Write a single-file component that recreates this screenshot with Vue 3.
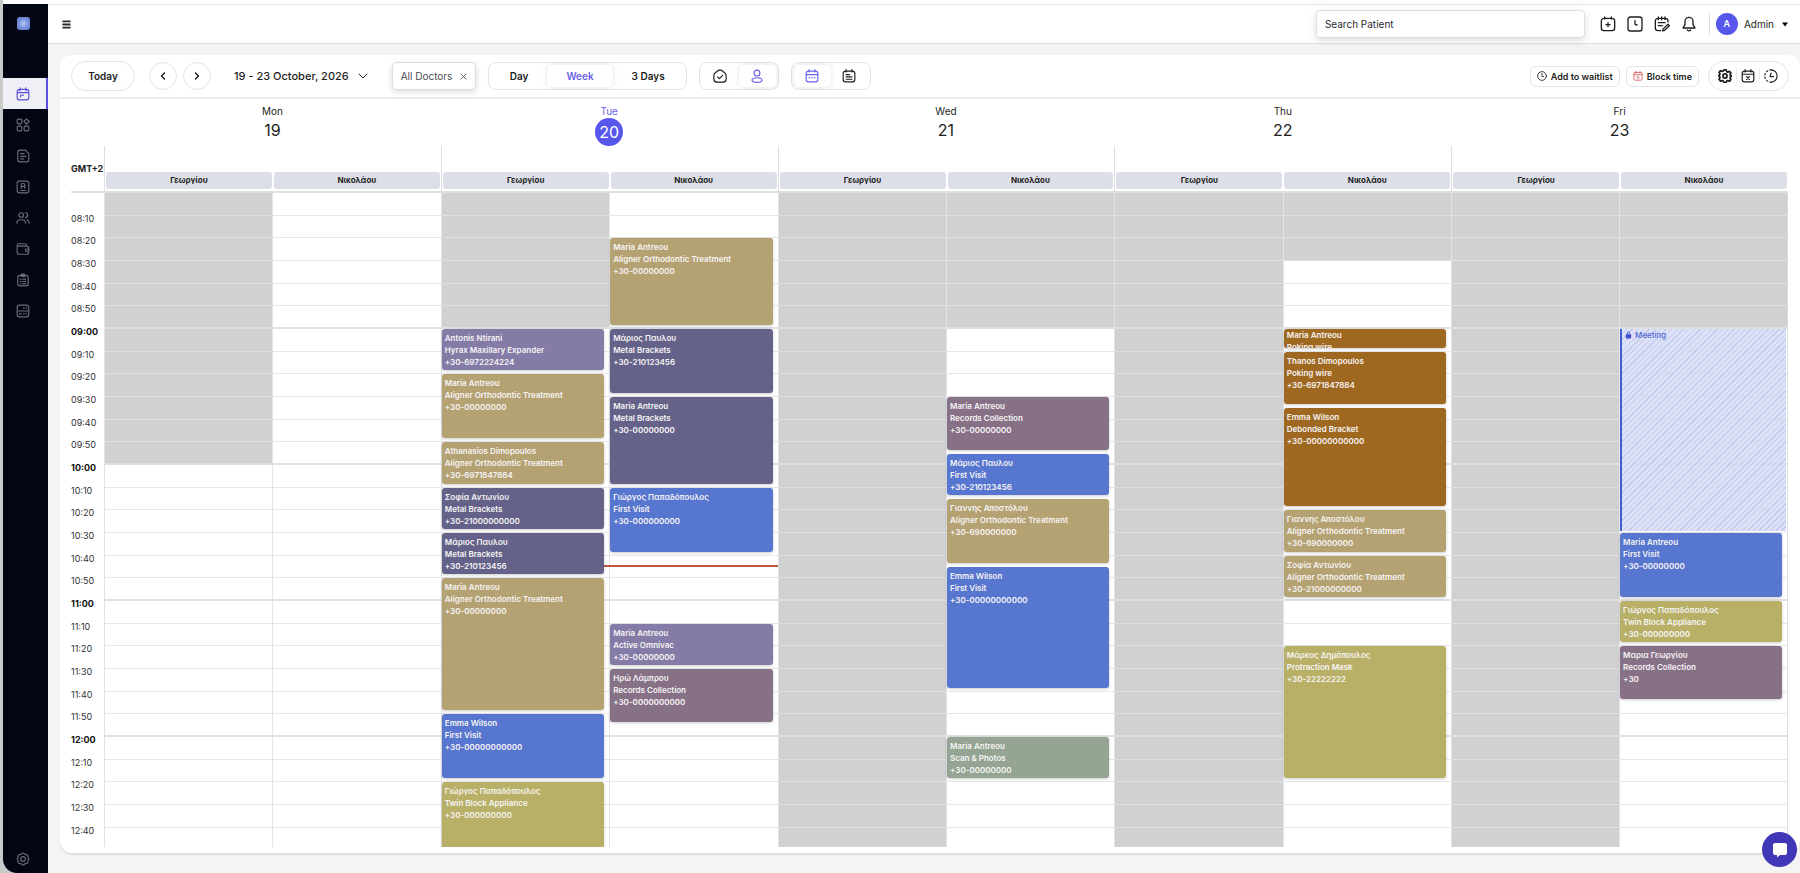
<script setup>
import { ref } from 'vue'

const SLOT_MINUTES = 10
const TOTAL_MINUTES = 300
const pct = (minutes) => (minutes / TOTAL_MINUTES) * 100 + '%'

const search = ref('')
const view = ref('Week')
const views = ['Day', 'Week', '3 Days']

const slots = Array.from({ length: TOTAL_MINUTES / SLOT_MINUTES }, (_, i) => {
  const m = i * SLOT_MINUTES
  const h = String(8 + Math.floor(m / 60)).padStart(2, '0')
  const edge = i === 0 || m === TOTAL_MINUTES - SLOT_MINUTES
  return { start: m, label: edge ? '' : `${h}:${String(m % 60).padStart(2, '0')}`, hour: m % 60 === 0 }
})

const ALIGNER = 'Aligner Orthodontic Treatment'
const ev = (start, length, color, name, treatment, phone) => ({ start, length, color, name, treatment, phone })

const days = [
  {
    name: 'Mon', date: 19,
    columns: [
      { doctor: 'Γεωργίου', off: 120, events: [] },
      { doctor: 'Νικολάου', off: 0, events: [] },
    ],
  },
  {
    name: 'Tue', date: 20, today: true, now: 164,
    columns: [
      {
        doctor: 'Γεωργίου', off: 60,
        events: [
          ev(60, 20, 'purple', 'Antonis Ntirani', 'Hyrax Maxillary Expander', '+30-6972224224'),
          ev(80, 30, 'tan', 'Maria Antreou', ALIGNER, '+30-00000000'),
          ev(110, 20, 'tan', 'Athanasios Dimopoulos', ALIGNER, '+30-6971847884'),
          ev(130, 20, 'indigo', 'Σοφία Αντωνίου', 'Metal Brackets', '+30-21000000000'),
          ev(150, 20, 'indigo', 'Μάριος Παυλου', 'Metal Brackets', '+30-210123456'),
          ev(170, 60, 'tan', 'Maria Antreou', ALIGNER, '+30-00000000'),
          ev(230, 30, 'blue', 'Emma Wilson', 'First Visit', '+30-00000000000'),
          ev(260, 40, 'olive', 'Γιώργος Παπαδόπουλος', 'Twin Block Appliance', '+30-000000000'),
        ],
      },
      {
        doctor: 'Νικολάου', off: 0,
        events: [
          ev(20, 40, 'tan', 'Maria Antreou', ALIGNER, '+30-00000000'),
          ev(60, 30, 'indigo', 'Μάριος Παυλου', 'Metal Brackets', '+30-210123456'),
          ev(90, 40, 'indigo', 'Maria Antreou', 'Metal Brackets', '+30-00000000'),
          ev(130, 30, 'blue', 'Γιώργος Παπαδόπουλος', 'First Visit', '+30-000000000'),
          ev(190, 20, 'purple', 'Maria Antreou', 'Active Omnivac', '+30-00000000'),
          ev(210, 25, 'mauve', 'Ηρώ Λάμπρου', 'Records Collection', '+30-0000000000'),
        ],
      },
    ],
  },
  {
    name: 'Wed', date: 21,
    columns: [
      { doctor: 'Γεωργίου', off: 300, events: [] },
      {
        doctor: 'Νικολάου', off: 60,
        events: [
          ev(90, 25, 'mauve', 'Maria Antreou', 'Records Collection', '+30-00000000'),
          ev(115, 20, 'blue', 'Μάριος Παυλου', 'First Visit', '+30-210123456'),
          ev(135, 30, 'tan', 'Γιαννης Αποστόλου', ALIGNER, '+30-690000000'),
          ev(165, 55, 'blue', 'Emma Wilson', 'First Visit', '+30-00000000000'),
          ev(240, 20, 'green', 'Maria Antreou', 'Scan & Photos', '+30-00000000'),
        ],
      },
    ],
  },
  {
    name: 'Thu', date: 22,
    columns: [
      { doctor: 'Γεωργίου', off: 300, events: [] },
      {
        doctor: 'Νικολάου', off: 30,
        events: [
          ev(60, 10, 'brown', 'Maria Antreou', 'Poking wire', ''),
          ev(70, 25, 'brown', 'Thanos Dimopoulos', 'Poking wire', '+30-6971847884'),
          ev(95, 45, 'brown', 'Emma Wilson', 'Debonded Bracket', '+30-00000000000'),
          ev(140, 20, 'tan', 'Γιαννης Αποστόλου', ALIGNER, '+30-690000000'),
          ev(160, 20, 'tan', 'Σοφία Αντωνίου', ALIGNER, '+30-21000000000'),
          ev(200, 60, 'olive', 'Μάρκος Δημόπουλος', 'Protraction Mask', '+30-22222222'),
        ],
      },
    ],
  },
  {
    name: 'Fri', date: 23,
    columns: [
      { doctor: 'Γεωργίου', off: 300, events: [] },
      {
        doctor: 'Νικολάου', off: 60,
        block: { start: 60, length: 90, title: 'Meeting' },
        events: [
          ev(150, 30, 'blue', 'Maria Antreou', 'First Visit', '+30-00000000'),
          ev(180, 20, 'olive', 'Γιώργος Παπαδόπουλος', 'Twin Block Appliance', '+30-000000000'),
          ev(200, 25, 'mauve', 'Μαρια Γεωργίου', 'Records Collection', '+30'),
        ],
      },
    ],
  },
]

const nav = [
  { label: 'Calendar', active: true, paths: ['M6 4h12a4 4 0 0 1 4 4v10a4 4 0 0 1-4 4H6a4 4 0 0 1-4-4V8a4 4 0 0 1 4-4zM2 9.500h20M7 1.500v5M17 1.500v5', 'M8 14v3M12 13.500v1M8 14h1M11.500 14h1'] },
  { label: 'Dashboard', paths: ['M4 2h4a2 2 0 0 1 2 2v4a2 2 0 0 1-2 2H4a2 2 0 0 1-2-2V4a2 2 0 0 1 2-2zM18 1.500l4.500 4.500-4.500 4.500L13.500 6zM4 14h4a2 2 0 0 1 2 2v4a2 2 0 0 1-2 2H4a2 2 0 0 1-2-2v-4a2 2 0 0 1 2-2zM16 14h4a2 2 0 0 1 2 2v4a2 2 0 0 1-2 2h-4a2 2 0 0 1-2-2v-4a2 2 0 0 1 2-2z'] },
  { label: 'Documents', paths: ['M7 2h9l6 6v10a4 4 0 0 1-4 4H7a4 4 0 0 1-4-4V6a4 4 0 0 1 4-4zM8 8h6M8 12.500h9M8 17h5'] },
  { label: 'Prescriptions', paths: ['M6 2h12a4 4 0 0 1 4 4v12a4 4 0 0 1-4 4H6a4 4 0 0 1-4-4V6a4 4 0 0 1 4-4zM9 14V8.500a3 3 0 0 1 6 0V14M9 11h6M8 18h8'] },
  { label: 'Patients', paths: ['M9 3a4 4 0 1 1 0 8 4 4 0 0 1 0-8zM1.500 21v-1a6 6 0 0 1 6-5h3a6 6 0 0 1 6 5v1M16 3a4 4 0 0 1 0 8M19 15a6 6 0 0 1 3.500 5v1'] },
  { label: 'Payments', paths: ['M4 7h14a4 4 0 0 1 4 4v6a4 4 0 0 1-4 4H6a4 4 0 0 1-4-4V6a3 3 0 0 1 3-3h10a3 3 0 0 1 3 3v1M22 12h-4a2 2 0 0 0 0 4h4'] },
  { label: 'Reports', paths: ['M7 4h10a4 4 0 0 1 4 4v10a4 4 0 0 1-4 4H7a4 4 0 0 1-4-4V8a4 4 0 0 1 4-4zM9 2h6v4H9zM7.500 10.500h1M11.500 10.500h5M7.500 14.500h1M11.500 14.500h5M7.500 18.500h1M11.500 18.500h5'] },
  { label: 'Inventory', paths: ['M6 2h12a4 4 0 0 1 4 4v12a4 4 0 0 1-4 4H6a4 4 0 0 1-4-4V6a4 4 0 0 1 4-4zM2 12h20M13 7h1M17.500 7h1M6 17h3M13 17h1M17.500 17h1'] },
]
</script>

<template>
  <div class="app">
    <nav class="sidebar" aria-label="Main">
      <span class="logo"></span>
      <div class="nav">
        <a v-for="item in nav" :key="item.label" href="#" class="nav-item" :class="{ active: item.active }" :aria-label="item.label">
          <svg class="icon nav-icon" viewBox="0 0 24 24"><path v-for="d in item.paths" :key="d" :d="d" /></svg>
        </a>
      </div>
      <a href="#" class="settings" aria-label="Settings">
        <svg class="icon nav-icon" viewBox="0 0 24 24"><path d="M10 2.500q2-1.500 4 0l1.500 1.500 3 .5q2 1 2 3l.2 2.500 1.300 2-1.300 2-.2 2.500q0 2-2 3l-3 .5-1.500 1.500q-2 1.500-4 0L8.500 20l-3-.5q-2-1-2-3l-.2-2.500L2 12l1.300-2 .2-2.500q0-2 2-3l3-.5z" /><circle cx="12" cy="12" r="4" /></svg>
      </a>
    </nav>

    <div class="main">
      <header class="topbar">
        <button class="plain menu" aria-label="Toggle menu">
          <svg viewBox="0 0 10 9"><path d="M0.500 1h9M0.500 4.500h9M0.500 8h9" /></svg>
        </button>
        <div class="top-actions">
          <input v-model="search" class="search" type="text" placeholder="Search Patient" aria-label="Search Patient" />
          <div class="top-icons">
            <button class="plain" aria-label="New appointment">
              <svg class="icon i16" viewBox="0 0 24 24"><path d="M6 3.500h12a4 4 0 0 1 4 4V18a4 4 0 0 1-4 4H6a4 4 0 0 1-4-4V7.500a4 4 0 0 1 4-4zM7 1.500v3M17 1.500v3M12 10v6M9 13h6" /></svg>
            </button>
            <button class="plain" aria-label="Waiting time">
              <svg class="icon i16" viewBox="0 0 24 24"><path d="M5 1.500h14a3.500 3.500 0 0 1 3.500 3.500v14a3.500 3.500 0 0 1-3.500 3.500H5A3.500 3.500 0 0 1 1.500 19V5A3.500 3.500 0 0 1 5 1.500zM12 7v5.500l3 1" /></svg>
            </button>
            <button class="plain" aria-label="Notes">
              <svg class="icon i16" viewBox="0 0 24 24"><path d="M21 9V7.500a4 4 0 0 0-4-4H6a4 4 0 0 0-4 4V18a4 4 0 0 0 4 4h4M6.500 1.500v4M11.500 1.500v4M16.500 1.500v4M6.500 10h10M6.500 14.500h6M21 12.500l2 2-7 7-3 .8.8-3z" /></svg>
            </button>
            <button class="plain" aria-label="Notifications">
              <svg class="icon i16" viewBox="0 0 24 24"><path d="M12 2a6 6 0 0 1 6 6v5l3 5H3l3-5V8a6 6 0 0 1 6-6zM9.500 21q2.500 2.500 5 0" /></svg>
            </button>
          </div>
          <button class="plain user">
            <span class="avatar">A</span>
            <span class="user-name">Admin</span>
            <svg class="caret" viewBox="0 0 8 5"><path d="M1 0.500h6L4 4.500z" /></svg>
          </button>
        </div>
      </header>

      <section class="card">
        <div class="toolbar">
          <button class="today">Today</button>
          <div class="arrows">
            <button class="round" aria-label="Previous"><svg class="icon i10" viewBox="0 0 10 10"><path d="M6.500 2L3.500 5l3 3" /></svg></button>
            <button class="round" aria-label="Next"><svg class="icon i10" viewBox="0 0 10 10"><path d="M3.500 2l3 3-3 3" /></svg></button>
          </div>
          <button class="plain range">
            19 - 23 October, 2026
            <svg class="icon i10 thin" viewBox="0 0 10 10"><path d="M1 3l4 4 4-4" /></svg>
          </button>
          <div class="doctor-filter">
            <span>All Doctors</span>
            <button class="plain clear" aria-label="Clear doctor filter"><svg class="icon" viewBox="0 0 8 8"><path d="M1 1l6 6M7 1L1 7" /></svg></button>
          </div>
          <div class="segment views">
            <button v-for="v in views" :key="v" :class="{ on: view === v }" @click="view = v">{{ v }}</button>
          </div>
          <div class="segment icons">
            <button aria-label="By room"><svg class="icon i14" viewBox="0 0 24 24"><path d="M9 2.500q3-2 6 0l5 4q2.500 2 2.500 5V17q0 5-5 5.500h-11Q1.500 22 1.500 17v-5.500q0-3 2.500-5zM8 13.500l3 3 5.500-5.500" /></svg></button>
            <button class="on" aria-label="By doctor"><svg class="icon i14" viewBox="0 0 24 24"><circle cx="12" cy="7" r="5" /><ellipse cx="12" cy="19" rx="8.500" ry="4" /></svg></button>
          </div>
          <div class="segment icons">
            <button class="on" aria-label="Calendar view"><svg class="icon i14" viewBox="0 0 24 24"><path d="M6 3.500h12a4 4 0 0 1 4 4V18a4 4 0 0 1-4 4H6a4 4 0 0 1-4-4V7.500a4 4 0 0 1 4-4zM2 9.500h20M7 1v4M17 1v4M7 15h1.500M11.500 15h1.500M16 15h1.500" /></svg></button>
            <button aria-label="List view"><svg class="icon i14" viewBox="0 0 24 24"><path d="M6 3.500h12a4 4 0 0 1 4 4V18a4 4 0 0 1-4 4H6a4 4 0 0 1-4-4V7.500a4 4 0 0 1 4-4zM7 1v4M17 1v4M7 9.500h6M7 13.500h10M7 17.500h10" /></svg></button>
          </div>
          <div class="right">
            <button class="action">
              <svg class="icon i10" viewBox="0 0 24 24"><circle cx="12" cy="12" r="10.500" /><path d="M12 6v7h4" /></svg>
              Add to waitlist
            </button>
            <button class="action">
              <svg class="icon i10 red" viewBox="0 0 24 24"><path d="M5 3.500h14a3 3 0 0 1 3 3V19a3 3 0 0 1-3 3H5a3 3 0 0 1-3-3V6.500a3 3 0 0 1 3-3zM2 9h20M7 1v4M17 1v4M9.500 13l5 5M14.500 13l-5 5" /></svg>
              Block time
            </button>
            <div class="pill">
              <button class="plain" aria-label="Calendar settings"><svg class="icon i14 bold" viewBox="0 0 24 24"><path d="M10 1.500h4l.8 3 2 .9 2.700-1.500 2.600 2.700-1.500 2.700.8 2 2.600.7-2.600 1.700-.8 2 1.500 2.700-2.600 2.700-2.700-1.500-2 .9-.8 2.700h-4l-.8-2.700-2-.9-2.700 1.500L1.900 17.400l1.500-2.700-.8-2L1 11.300l1.600-1 .8-2-1.500-2.700 2.600-2.700 2.700 1.500 2-.9z" /><circle cx="12" cy="12" r="3.500" /></svg></button>
              <button class="plain" aria-label="Blocked days"><svg class="icon i14" viewBox="0 0 24 24"><path d="M6 3.500h12a4 4 0 0 1 4 4V18a4 4 0 0 1-4 4H6a4 4 0 0 1-4-4V7.500a4 4 0 0 1 4-4zM2 9h20M7 1v4M17 1v4M9.500 13l5 5M14.500 13l-5 5" /></svg></button>
              <button class="plain" aria-label="History"><svg class="icon i14" viewBox="0 0 24 24"><path d="M12 1.500a10.500 10.500 0 0 1 0 21" /><path stroke-dasharray="2 4" d="M12 22.500a10.500 10.500 0 0 1 0-21" /><path d="M12 7l-1.500 6h6" /></svg></button>
            </div>
          </div>
        </div>

        <div class="heads">
          <div class="zone">GMT+2</div>
          <div v-for="day in days" :key="day.date" class="head">
            <div class="day" :class="{ current: day.today }">
              <span class="weekday">{{ day.name }}</span>
              <span class="date">{{ day.date }}</span>
            </div>
            <div class="doctors">
              <div v-for="c in day.columns" :key="c.doctor" class="doctor">{{ c.doctor }}</div>
            </div>
          </div>
        </div>

        <div class="scroller">
          <div class="grid">
            <div class="times">
              <div v-for="s in slots" :key="s.start" class="time" :class="{ hour: s.hour }"><span>{{ s.label }}</span></div>
            </div>
            <div v-for="day in days" :key="day.date" class="day-body">
              <div v-for="c in day.columns" :key="c.doctor" class="column">
                <div v-for="s in slots" :key="s.start" class="slot" :class="{ off: s.start < c.off, last: s.start % 60 === 50 }"></div>
                <div v-if="c.block" class="block" :style="{ top: pct(c.block.start), height: pct(c.block.length) }">
                  <div class="block-in">
                    <svg class="lock" viewBox="0 0 8 9"><rect x="1" y="3.500" width="6" height="5" rx="1" /><path d="M2.500 4V2.500a1.500 1.500 0 0 1 3 0V4" /></svg>
                    {{ c.block.title }}
                  </div>
                </div>
                <div v-for="e in c.events" :key="e.start" class="event" :style="{ top: pct(e.start), height: pct(e.length) }">
                  <div class="event-in" :class="[e.color, { short: e.length <= 10 }]">
                    <div>{{ e.name }}</div>
                    <div>{{ e.treatment }}</div>
                    <div v-if="e.phone">{{ e.phone }}</div>
                  </div>
                </div>
              </div>
              <div v-if="day.now" class="now" :style="{ top: pct(day.now) }"></div>
            </div>
          </div>
        </div>
      </section>
    </div>

    <button class="chat" aria-label="Open chat">
      <svg viewBox="0 0 16 16"><path d="M3 1h10a2 2 0 0 1 2 2v8a2 2 0 0 1-2 2H8l-3 2.500V13H3a2 2 0 0 1-2-2V3a2 2 0 0 1 2-2z" /></svg>
    </button>
  </div>
</template>

<style>
body {
  background: #fdfdfd;
}
</style>

<style scoped>
.app {
  box-sizing: border-box;
  display: flex;
  height: 100vh;
  padding-top: 4px;
  border-left: 3px solid #c9cbca;
  background: linear-gradient(#fdfdfd 4px, #c9cbca 4px);
  font-family: Inter, "Noto Sans", sans-serif;
  color: #1d1e22;
}
.app * {
  box-sizing: border-box;
}
button {
  font-family: inherit;
  color: inherit;
  cursor: pointer;
}
.plain {
  display: flex;
  align-items: center;
  padding: 0;
  border: 0;
  background: none;
}
.icon {
  display: block;
  fill: none;
  stroke: currentColor;
  stroke-width: 2;
  stroke-linecap: round;
  stroke-linejoin: round;
}
.i10 { width: 10px; height: 10px; }
.i14 { width: 14px; height: 14px; }
.i16 { width: 16px; height: 16px; }
.bold { stroke-width: 3; }
.red { color: #d9585c; }

/* Sidebar */
.sidebar {
  display: flex;
  flex-direction: column;
  align-items: center;
  flex: none;
  width: 45px;
  padding: 13px 0 7px;
  background: #020614;
  border-bottom-left-radius: 14px;
}
.logo {
  width: 13px;
  height: 13px;
  margin-right: 5px;
  border-radius: 3px;
  background: radial-gradient(#a9bdf0 10%, #6f86d8 60%);
}
.nav {
  align-self: stretch;
  margin-top: 48px;
}
.nav-item {
  display: flex;
  align-items: center;
  justify-content: center;
  height: 31px;
  padding-right: 5px;
  color: #696c77;
}
.nav-item.active {
  padding-right: 3px;
  border-right: 2px solid #5b50e8;
  background: #eff0f6;
  color: #5b50d8;
}
.nav-icon {
  width: 14px;
  height: 14px;
}
.settings {
  margin: auto 5px 0 0;
  color: #696c77;
}

/* Top bar */
.main {
  display: flex;
  flex: 1;
  flex-direction: column;
  min-width: 0;
  background: #f4f4f5;
}
.topbar {
  display: flex;
  align-items: center;
  justify-content: space-between;
  flex: none;
  height: 40px;
  padding: 0 11px 0 14px;
  border-top: 1px solid #e2e4e4;
  border-bottom: 1px solid #dfe1e1;
  background: #fff;
}
.menu svg {
  width: 9px;
  height: 9px;
  fill: none;
  stroke: #2b2b2b;
  stroke-width: 2;
}
.top-actions {
  display: flex;
  align-items: center;
}
.search {
  width: 269px;
  height: 28px;
  padding: 0 8px;
  border: 1px solid #dddfe2;
  border-radius: 4px;
  background: #fff;
  box-shadow: 0 3px 8px rgba(0, 0, 0, 0.13);
  font-family: inherit;
  font-size: 10px;
  color: #2b2c30;
}
.search::placeholder {
  color: #2b2c30;
  opacity: 1;
}
.top-icons {
  display: flex;
  gap: 11px;
  padding: 0 12px 0 15px;
}
.user {
  gap: 6px;
  height: 22px;
  padding-left: 6px;
  border-left: 1px solid #dcdee1;
}
.avatar {
  width: 22px;
  border-radius: 50%;
  background: #5757ec;
  color: #fff;
  font-size: 9px;
  font-weight: 600;
  line-height: 22px;
}
.user-name {
  font-size: 10px;
}
.caret {
  width: 8px;
  height: 5px;
  margin-left: 1px;
}

/* Calendar card */
.card {
  display: flex;
  flex: 1;
  flex-direction: column;
  min-height: 0;
  margin: 11px 0 20px 12px;
  padding-bottom: 6px;
  border-radius: 12px;
  background: #fff;
  box-shadow: 0 2px 1px #dedfdf;
}
.toolbar {
  display: flex;
  align-items: center;
  flex: none;
  height: 44px;
  padding: 0 11px;
  border-bottom: 2px solid #ededee;
}
.today {
  width: 64px;
  height: 30px;
  border: 1px solid #e4e4e6;
  border-radius: 15px;
  background: #fff;
  font-size: 10px;
  font-weight: 600;
}
.arrows {
  display: flex;
  gap: 6px;
  margin-left: 14px;
}
.round {
  display: grid;
  place-items: center;
  width: 28px;
  height: 28px;
  padding: 0;
  border: 1px solid #e4e4e6;
  border-radius: 50%;
  background: #fff;
}
.round .icon {
  stroke-width: 1.500;
}
.range {
  gap: 9px;
  margin-left: 23px;
  font-size: 11px;
  font-weight: 500;
}
.thin {
  stroke-width: 1;
}
.doctor-filter {
  display: flex;
  justify-content: space-between;
  align-items: center;
  width: 84px;
  height: 28px;
  margin-left: 24px;
  padding: 0 8px;
  border: 1px solid #dcdde0;
  border-radius: 5px;
  box-shadow: 0 2px 6px rgba(0, 0, 0, 0.15);
  color: #4c4d52;
  font-size: 10px;
  white-space: nowrap;
}
.clear .icon {
  width: 7px;
  height: 7px;
  stroke-width: 1;
}
.segment {
  display: flex;
  height: 28px;
  margin-left: 12px;
  padding: 2px;
  border: 1px solid #e4e4e6;
  border-radius: 8px;
}
.segment button {
  display: grid;
  place-items: center;
  padding: 0;
  border: 0;
  border-radius: 5px;
  background: none;
  font-size: 10px;
  font-weight: 600;
}
.segment .on {
  background: #fff;
  box-shadow: 0 0 5px rgba(0, 0, 0, 0.12);
  color: #6a63e4;
}
.segment.views button {
  padding: 0 19px;
}
.icons button {
  width: 37px;
}
.right {
  display: flex;
  align-items: center;
  gap: 6px;
  margin-left: auto;
}
.action {
  display: flex;
  align-items: center;
  gap: 4px;
  height: 21px;
  padding: 0 6px;
  border: 1px solid #e4e4e6;
  border-radius: 6px;
  background: #fff;
  font-size: 9px;
  font-weight: 600;
}
.pill {
  display: flex;
  align-items: center;
  height: 30px;
  margin-left: 3px;
  padding: 0 6px 0 5px;
  border: 1px solid #e4e4e6;
  border-radius: 15px;
}
.pill button {
  padding: 1px 4px;
}
.pill button + button {
  border-left: 1px solid #ececee;
}

/* Day headings */
.heads,
.grid {
  display: grid;
  grid-template-columns: 33px repeat(5, minmax(0, 1fr));
  margin: 0 12px 0 11px;
}
.heads {
  flex: none;
  border-bottom: 2px solid #dedfdf;
}
.zone {
  align-self: end;
  padding-bottom: 16px;
  font-size: 9px;
  font-weight: 700;
  line-height: 12px;
}
.day {
  display: flex;
  flex-direction: column;
  align-items: center;
  gap: 1px;
  height: 47px;
  padding-top: 6px;
}
.weekday {
  font-size: 10px;
  line-height: 12px;
}
.date {
  width: 28px;
  border-radius: 50%;
  font-size: 16px;
  line-height: 24px;
  text-align: center;
}
.current .weekday {
  color: #6a63e4;
}
.current .date {
  background: #5757ec;
  color: #fff;
  line-height: 28px;
}
.doctors {
  display: flex;
  align-items: flex-end;
  gap: 2px;
  height: 45px;
  padding: 0 1px 2px;
  border-left: 1px solid #dedfe1;
}
.doctor {
  flex: 1;
  border-radius: 3px;
  background: #dcdee8;
  font-size: 8px;
  font-weight: 700;
  line-height: 17px;
  text-align: center;
}

/* Time grid */
.scroller {
  flex: 1;
  min-height: 0;
  overflow: hidden;
}
.grid {
  height: 680px;
}
.times {
  display: grid;
  grid-auto-rows: 1fr;
}
.time {
  margin-top: -3px;
  font-size: 9px;
  line-height: 12px;
  color: #303136;
}
.time.hour {
  font-weight: 700;
  color: #111;
}
.day-body {
  position: relative;
  display: flex;
  border-left: 1px solid #e0e1e3;
}
.day-body:last-child {
  border-right: 1px solid #dedfe1;
}
.column {
  position: relative;
  display: grid;
  flex: 1;
  grid-auto-rows: 1fr;
}
.column:first-child {
  border-right: 1px solid #e4e5e7;
}
.slot {
  border-bottom: 1px solid #e6e7e9;
}
.slot.last {
  border-bottom: 2px solid #dfe1e2;
}
.slot.off {
  border-bottom-color: #dfe0e0;
  background: #d1d1d1;
}
.event {
  position: absolute;
  z-index: 2;
  left: 0;
  right: 5px;
  padding-bottom: 4px;
}
.event-in {
  height: 100%;
  padding: 3px;
  overflow: hidden;
  border-radius: 3px;
  box-shadow: 0 1px 3px rgba(0, 0, 0, 0.2);
  color: #f6f4f4;
  font-size: 8px;
  font-weight: 600;
  line-height: 12px;
  white-space: nowrap;
}
.event-in.short {
  padding-top: 0;
}
.tan { background: #b5a273; }
.purple { background: #857ba7; }
.indigo { background: #646288; }
.blue { background: #5776cf; }
.mauve { background: #877187; }
.brown { background: #9f6820; }
.olive { background: #b9b068; }
.green { background: #95a493; }
.block {
  position: absolute;
  z-index: 2;
  left: 0;
  right: 1px;
  padding-bottom: 2px;
}
.block-in {
  display: flex;
  gap: 3px;
  height: 100%;
  padding: 0 3px;
  border-left: 2px solid #3f5fd3;
  background: repeating-linear-gradient(135deg, rgba(216, 221, 244, 0.88) 0 3px, rgba(186, 194, 236, 0.88) 3px 4px);
  color: #5468d4;
  font-size: 8px;
  font-weight: 500;
  line-height: 12px;
}
.lock {
  width: 7px;
  height: 8px;
  margin-top: 2px;
  fill: #3f50d0;
}
.lock path {
  fill: none;
  stroke: #3f50d0;
}
.now {
  position: absolute;
  z-index: 1;
  left: 0;
  right: 0;
  height: 2px;
  background: #c0583f;
}

.chat {
  position: fixed;
  z-index: 5;
  right: 3px;
  bottom: 6px;
  display: grid;
  place-items: center;
  width: 35px;
  height: 35px;
  padding: 0;
  border: 0;
  border-radius: 50%;
  background: #4038b6;
}
.chat svg {
  width: 16px;
  height: 16px;
  fill: #fff;
}
</style>
